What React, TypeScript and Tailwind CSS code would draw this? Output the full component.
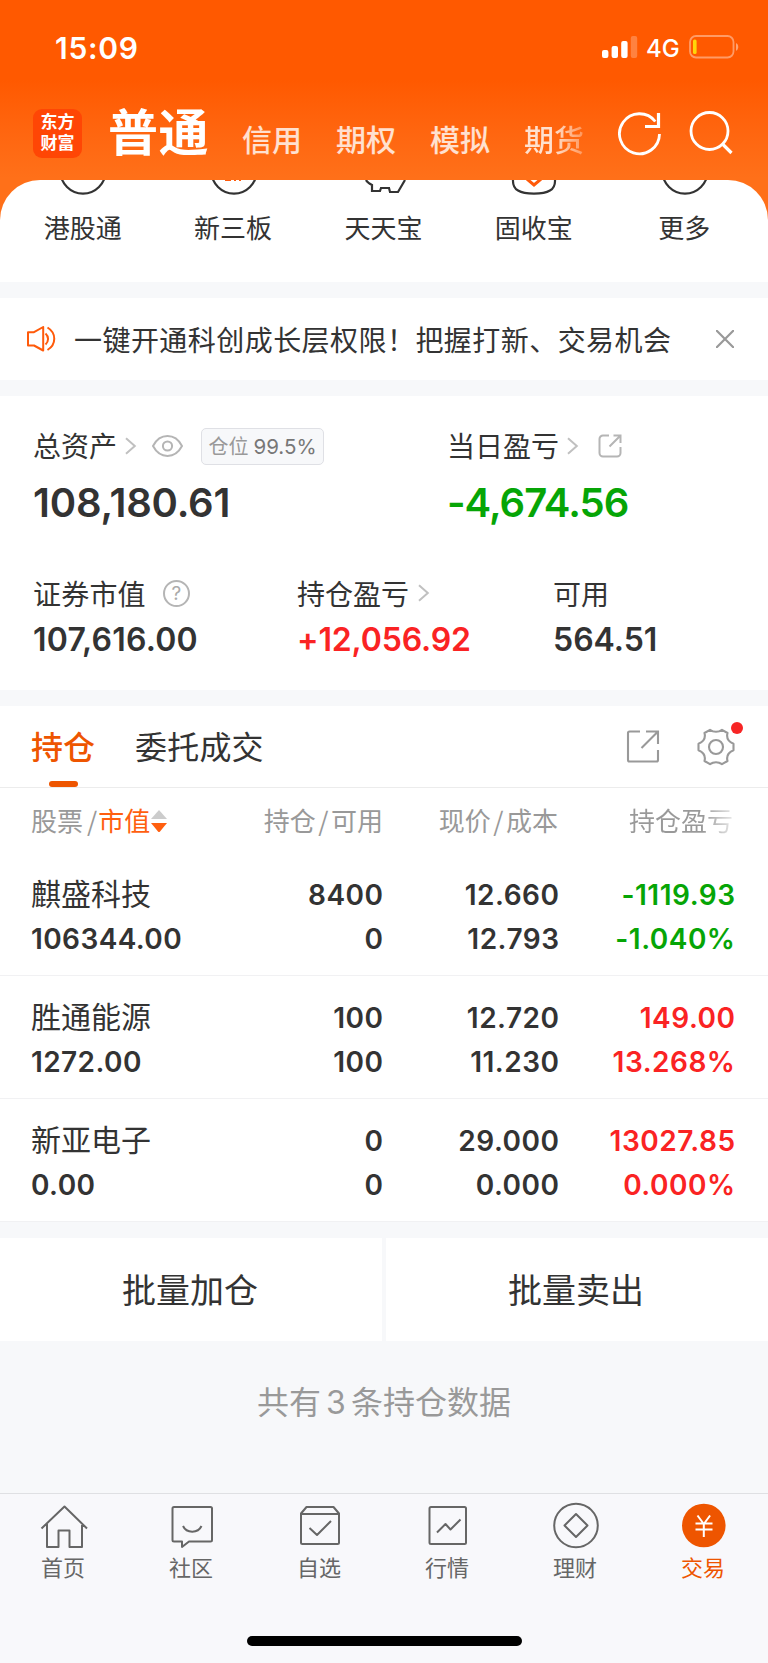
import type { ReactNode } from "react";

const NUM = "font-['Inter','Noto_Sans_CJK_SC',sans-serif]";

const ACCOUNT_TABS = ["信用", "期权", "模拟", "期货"];

type Holding = {
  name: string; value: string; held: string; usable: string;
  price: string; cost: string; pnl: string; pct: string; up: boolean;
};

const HOLDINGS: Holding[] = [
  { name: "麒盛科技", value: "106344.00", held: "8400", usable: "0", price: "12.660", cost: "12.793", pnl: "-1119.93", pct: "-1.040%", up: false },
  { name: "胜通能源", value: "1272.00", held: "100", usable: "100", price: "12.720", cost: "11.230", pnl: "149.00", pct: "13.268%", up: true },
  { name: "新亚电子", value: "0.00", held: "0", usable: "0", price: "29.000", cost: "0.000", pnl: "13027.85", pct: "0.000%", up: true },
];

function Chevron() {
  return (
    <svg width="12" height="18" viewBox="0 0 12 18" fill="none" stroke="#c0c0c0" strokeWidth="2">
      <path d="M1 1.2 9.8 9 1 16.8" />
    </svg>
  );
}

function StatusBar() {
  return (
    <div className="flex h-[94px] items-center justify-between pr-[28px] pl-[55px] text-white">
      <span className={`${NUM} mt-[1px] text-[30px] leading-none font-semibold tracking-[0.7px]`}>15:09</span>
      <div className="flex items-center">
        <svg width="36" height="22" viewBox="0 0 36 22" fill="#fff">
          <rect x="0" y="14" width="6.4" height="8" rx="2" />
          <rect x="9.6" y="10" width="6.4" height="12" rx="2" />
          <rect x="19.2" y="5" width="6.4" height="17" rx="2" />
          <rect x="28.8" y="0" width="6.4" height="22" rx="2" opacity=".25" />
        </svg>
        <span className={`${NUM} mt-[3px] ml-[8px] w-[43px] text-[24px] leading-none font-medium`}>4G</span>
        <svg width="51" height="24" viewBox="0 0 51 24" fill="none">
          <rect x="1" y="1" width="43.5" height="21.5" rx="6" stroke="#fff" strokeOpacity=".4" strokeWidth="1.8" />
          <rect x="4" y="4.5" width="3.6" height="14.5" rx="1.6" fill="#ffd60a" />
          <path d="M47 8c3 1.2 3 6.6 0 7.8Z" fill="#fff" fillOpacity=".45" />
        </svg>
      </div>
    </div>
  );
}

function Header() {
  return (
    <div className="flex h-[86px] items-center pl-[33px] text-white">
      <div className={`${NUM} mt-[-8px] h-[49px] w-[49px] rounded-[9px] bg-[#ff4605] pt-[3px] text-center text-[17px] leading-[21px] font-bold`}>
        东方<br />财富
      </div>
      <span className="mt-[-17px] ml-[26px] text-[50px] leading-[60px] font-bold tracking-[0.5px] whitespace-nowrap">普通</span>
      <div className="mt-[2px] ml-[33px] flex gap-[34px] text-[30px] leading-[40px] font-medium text-white/80">
        {ACCOUNT_TABS.map((t, i) => (
          <span
            key={t}
            className={i === 3 ? "bg-linear-to-r from-white/80 from-50% to-white/30 bg-clip-text text-transparent" : ""}
          >
            {t}
          </span>
        ))}
      </div>
      <svg className="mt-[-8px] ml-[34px]" width="44" height="46" viewBox="0 0 44 46" fill="none" stroke="#fff" strokeWidth="2.8">
        <path d="M41.5 24a20 20 0 1 1-4.2-12.5" />
        <path d="M40.5 3v13.5H27" strokeWidth="3.2" />
      </svg>
      <svg className="mt-[-9px] ml-[26px]" width="46" height="46" viewBox="0 0 46 46" fill="none" stroke="#fff" strokeWidth="2.8">
        <circle cx="21.5" cy="21" r="18.5" />
        <path d="m35 34.5 8.5 8.5" strokeWidth="3.2" />
      </svg>
    </div>
  );
}

// the quick entries are scrolled half way under the header, only icon bottoms show
function Shortcut({ label, children }: { label: string; children: ReactNode }) {
  return (
    <div className="flex w-[150.4px] flex-col items-center">
      <svg width="50" height="16" viewBox="0 0 50 16" fill="none" stroke="#333" strokeWidth="2.2">
        {children}
      </svg>
      <span className="mt-[11px] mr-[1px] text-[26px] leading-[40px] text-[#333]">{label}</span>
    </div>
  );
}

function Shortcuts() {
  return (
    <div className="flex h-[102px] overflow-hidden rounded-t-[40px] bg-white pl-[8px]">
      <Shortcut label="港股通">
        <circle cx="25" cy="-9" r="22.6" />
      </Shortcut>
      <Shortcut label="新三板">
        <circle cx="25" cy="-9" r="22.6" />
        <path d="M16 .3h6M25 .3h2M30 .3h2" stroke="#ff5a0a" strokeWidth="1.2" />
      </Shortcut>
      <Shortcut label="天天宝">
        <path d="M7 0c1 2 3 3.500 6 5v6h8l1-3h8l1 4h8l7-12" />
      </Shortcut>
      <Shortcut label="固收宝">
        <path d="M4 0c-.5 10 7 13.600 21 13.600S46.500 10 46 0" />
        <path d="m18 -1 7 6 7-6" stroke="#ff5a0a" strokeWidth="3" />
      </Shortcut>
      <Shortcut label="更多">
        <circle cx="25" cy="-9" r="22.6" />
      </Shortcut>
    </div>
  );
}

function Notice() {
  return (
    <div className="mt-[16px] flex h-[82px] items-center bg-white pl-[27px]">
      <svg width="29" height="26" viewBox="0 0 29 26" fill="none" stroke="#ff5a0a" strokeWidth="2" strokeLinejoin="round">
        <path d="M1 6.2h6L16.200 1v23.500L7 19.500H1Z" />
        <path d="M18.500 7.500c3.400 3 3.400 8 0 11" />
        <path d="M20.500 1.500c9 5.500 9 17 0 22.500" />
      </svg>
      <span className="mt-[-1px] ml-[18px] text-[28px] leading-[40px] tracking-[0.45px] whitespace-nowrap text-[#333]">
        一键开通科创成长层权限！把握打新、交易机会
      </span>
      <svg className="ml-auto mr-[34px]" width="18" height="18" viewBox="0 0 18 18" stroke="#999" strokeWidth="2.2">
        <path d="m0 0 18 18M18 0 0 18" />
      </svg>
    </div>
  );
}

function Assets() {
  return (
    <div className="mt-[16px] h-[294px] bg-white pl-[34px] text-[#333]">
      <div className="flex pt-[30px]">
        <div className="w-[413px]">
          <div className="flex h-[40px] items-center">
            <span className="mt-[-2px] ml-[-1px] text-[28px] leading-[40px]">总资产</span>
            <span className="ml-[8px]"><Chevron /></span>
            <svg className="ml-[15px]" width="31" height="22" viewBox="0 0 31 22" fill="none" stroke="#b5b5b5" strokeWidth="2">
              <path d="M1 11C8-2.200 23-2.200 30 11 23 24.200 8 24.200 1 11Z" />
              <circle cx="15.500" cy="11" r="4.600" />
            </svg>
            <span className={`${NUM} ml-[18px] flex h-[37px] w-[123px] items-center justify-center rounded-[5px] border border-[#dfe0e5] bg-[#f7f8fa] pt-[2px] text-[20.5px] text-[#777]`}>
              <span className="mr-[5px] text-[20px] text-[#999]">仓位</span>99.5%
            </span>
          </div>
          <div className={`${NUM} mt-[16px] ml-[-1px] text-[40px] leading-[42px] font-semibold tracking-[-0.2px]`}>108,180.61</div>
        </div>
        <div>
          <div className="flex h-[40px] items-center">
            <span className="mt-[-2px] text-[28px] leading-[40px]">当日盈亏</span>
            <span className="ml-[8px]"><Chevron /></span>
            <svg className="ml-[19px]" width="24" height="24" viewBox="0 0 24 24" fill="none" stroke="#b5b5b5" strokeWidth="2">
              <path d="M11 1.500H5a3.500 3.500 0 0 0-3.500 3.500v14A3.500 3.500 0 0 0 5 22.500h14a3.500 3.500 0 0 0 3.500-3.500v-6" />
              <path d="M15.500 1.500h7V9M22.500 1.500 11.500 12.500" />
            </svg>
          </div>
          <div className={`${NUM} mt-[16px] text-[40px] leading-[42px] font-semibold tracking-[-1px] text-[#06a506]`}>-4,674.56</div>
        </div>
      </div>

      <div className="mt-[50px] flex">
        <div className="w-[263px]">
          <div className="flex h-[40px] items-center">
            <span className="mt-[-3px] ml-[-1px] text-[28px] leading-[40px] tracking-[0.2px]">证券市值</span>
            <span className={`${NUM} mt-[-2px] ml-[17px] flex h-[27px] w-[27px] items-center justify-center rounded-full border-2 border-[#b5b5b5] text-[19px] leading-none text-[#aaa]`}>?</span>
          </div>
          <div className={`${NUM} mt-[5px] ml-[-1px] text-[32px] leading-[41px] font-semibold tracking-[0.2px]`}>107,616.00</div>
        </div>
        <div className="w-[256px]">
          <div className="flex h-[40px] items-center">
            <span className="mt-[-3px] text-[28px] leading-[40px]">持仓盈亏</span>
            <span className="mt-[-2px] ml-[9px]"><Chevron /></span>
          </div>
          <div className={`${NUM} mt-[5px] text-[32px] leading-[41px] font-semibold tracking-[-0.15px] text-[#fa2323]`}>+12,056.92</div>
        </div>
        <div>
          <div className="mt-[-1px] text-[28px] leading-[40px]">可用</div>
          <div className={`${NUM} mt-[6px] text-[32px] leading-[41px] font-semibold`}>564.51</div>
        </div>
      </div>
    </div>
  );
}

function HoldingTabs() {
  return (
    <div className="flex h-[82px] border-b border-[#ececec] pl-[31px]">
      <div className="relative h-full pt-[16px] text-[32px] leading-[46px] font-medium text-[#ee5500]">
        持仓
        <span className="absolute bottom-0 left-[18px] h-[6px] w-[29px] rounded-[3px] bg-[#ee5500]" />
      </div>
      <span className="ml-[40px] pt-[16px] text-[32px] leading-[46px] tracking-[0.2px] text-[#333]">委托成交</span>
      <svg className="mt-[24px] ml-auto" width="34" height="34" viewBox="0 0 34 34" fill="none" stroke="#999" strokeWidth="2.1">
        <path d="M14 1.500H3.500a1.500 1.500 0 0 0-1.500 1.500v27a1.500 1.500 0 0 0 1.500 1.500h27a1.500 1.500 0 0 0 1.500-1.500V20" />
        <path d="M20 1.500h12V14M32 1.500 15.500 18" />
      </svg>
      <div className="relative mt-[22px] mr-[32px] ml-[36px] h-[38px] w-[40px]">
        <svg width="40" height="38" viewBox="0 0 40 38" fill="none" stroke="#999" strokeWidth="2.1" strokeLinejoin="round">
          <path d="M14 1.800C17.500 4.200 22.500 4.200 26 1.800L31.500 5C30.200 10 32 13.500 37.500 15.800V22.200C32 24.500 30.200 28 31.500 33L26 36.200C22.500 33.800 17.500 33.800 14 36.200L8.500 33C9.800 28 8 24.500 2.500 22.200V15.800C8 13.500 9.800 10 8.500 5Z" />
          <circle cx="20" cy="19" r="7" />
        </svg>
        <span className="absolute top-[-6px] right-[-7px] h-[12px] w-[12px] rounded-full bg-[#f72525]" />
      </div>
    </div>
  );
}

function Cell({ a, b, className }: { a: string; b: string; className: string }) {
  return (
    <div className={`${NUM} mr-[-1.5px] text-right text-[28px] leading-[44px] font-semibold tracking-[0.5px] ${className}`}>
      <div>{a}</div>
      <div>{b}</div>
    </div>
  );
}

function HoldingTable() {
  return (
    <div>
      <div className="grid h-[65px] grid-cols-[180px_171px_176px_176px] items-center pb-[2px] pl-[31px] text-[26px] leading-[40px] text-[#999]">
        <div className="flex items-center whitespace-nowrap">
          股票<span className="mr-[1px] ml-[4px]">/</span><span className="text-[#ff5f0f]">市值</span>
          <svg className="mt-[2px] ml-[1px]" width="16" height="24" viewBox="0 0 16 24">
            <path d="M8 1 16 10H0Z" fill="#ccc" />
            <path d="M0 14h16L9 22.500Q8 23.500 7 22.500Z" fill="#ff5f0f" />
          </svg>
        </div>
        <div className="mr-[-1px] text-right">持仓<span className="mx-[2.5px]">/</span>可用</div>
        <div className="text-right">现价<span className="mx-[2.5px]">/</span>成本</div>
        <div className="ml-[71px] bg-linear-to-r from-[#999] from-70% to-[#999]/20 bg-clip-text whitespace-nowrap text-transparent">持仓盈亏</div>
      </div>
      {HOLDINGS.map((h) => (
        <div key={h.name} className="grid h-[123px] grid-cols-[180px_171px_176px_176px] border-b border-[#f1f1f3] pt-[20px] pl-[31px] text-[#333]">
          <div className="whitespace-nowrap">
            <div className="mt-[-3px] text-[30px] leading-[44px]">{h.name}</div>
            <div className={`${NUM} mt-[3px] text-[28px] leading-[44px] font-semibold tracking-[0.4px]`}>{h.value}</div>
          </div>
          <Cell a={h.held} b={h.usable} className="" />
          <Cell a={h.price} b={h.cost} className="" />
          <Cell a={h.pnl} b={h.pct} className={h.up ? "text-[#fa2323]" : "text-[#06a506]"} />
        </div>
      ))}
    </div>
  );
}

function NavItem({ label, active, children }: { label: string; active?: boolean; children: ReactNode }) {
  return (
    <div className={`flex w-[128px] flex-col items-center ${active ? "text-[#ee5500]" : "text-[#666]"}`}>
      <svg width="48" height="48" viewBox="0 0 48 48" fill="none" stroke="currentColor" strokeWidth="2" strokeLinejoin="round">
        {children}
      </svg>
      <span className="mr-[2px] text-[22px] leading-[32px]">{label}</span>
    </div>
  );
}

function BottomNav() {
  return (
    <div className="flex h-[143px] border-t border-[#dfe0e3] bg-[#f8f8fb] pt-[8px]">
      <NavItem label="首页">
        <path d="M1.500 26.500 24.500 4.500l22.500 22M7 21v24h11.500V28.500h11V45h12.500V21" />
      </NavItem>
      <NavItem label="社区">
        <path d="M6 5h36.500a1.500 1.500 0 0 1 1.500 1.500v31.500a1.500 1.500 0 0 1-1.500 1.500H21l-7 5.500v-5.500H6a1.500 1.500 0 0 1-1.500-1.500V6.500A1.500 1.500 0 0 1 6 5Z" />
        <path d="M15 24c3.500 7.500 15 7.500 18.500 0" />
      </NavItem>
      <NavItem label="自选">
        <path d="M10.500 5h27l5.500 6.500v29a1.500 1.500 0 0 1-1.500 1.500H6.500a1.500 1.500 0 0 1-1.500-1.500v-29ZM5 12h38M13.500 26l7.500 7 14-14" />
      </NavItem>
      <NavItem label="行情">
        <rect x="5.500" y="5" width="36.500" height="37" rx="1.500" />
        <path d="m13 30.500 8.500-8.500 5 5.500 10-10" />
      </NavItem>
      <NavItem label="理财">
        <circle cx="24" cy="23.500" r="21.800" />
        <path d="m24 12 11.500 11.500L24 35 12.500 23.500Z" />
      </NavItem>
      <NavItem label="交易" active>
        <circle cx="23.800" cy="23.500" r="21.800" fill="#ee5500" stroke="none" />
        <path d="m17.500 13.500 6.300 8.500 6.300-8.500M23.800 22v13M15.500 21.500h17M15.500 27.500h17" stroke="#fff" />
      </NavItem>
    </div>
  );
}

export default function App() {
  return (
    <div className="flex h-[1663px] w-[768px] flex-col overflow-hidden bg-[#f7f8fa] font-['Noto_Sans_CJK_SC',sans-serif]">
      <div className="bg-linear-to-b from-[#ff5900] from-[80px] to-[#ff7019] to-[178px]">
        <StatusBar />
        <Header />
        <Shortcuts />
      </div>
      <Notice />
      <Assets />
      <div className="mt-[16px] bg-white">
        <HoldingTabs />
        <HoldingTable />
      </div>
      <div className="mt-[16px] flex h-[103px] gap-[4px] text-[34px] text-[#333]">
        <button className="w-[382px] bg-white pr-[2px] pb-[2px]">批量加仓</button>
        <button className="w-[382px] bg-white pr-[2px] pb-[2px]">批量卖出</button>
      </div>
      <div className="mt-[36px] text-center text-[32px] leading-[46px] text-[#999]">
        共有<span className={`${NUM} mx-[5px]`}>3</span>条持仓数据
      </div>
      <div className="mt-auto">
        <BottomNav />
        <div className="flex h-[27px] justify-center bg-[#f8f8fb]">
          <div className="h-[10px] w-[275px] rounded-full bg-black" />
        </div>
      </div>
    </div>
  );
}
